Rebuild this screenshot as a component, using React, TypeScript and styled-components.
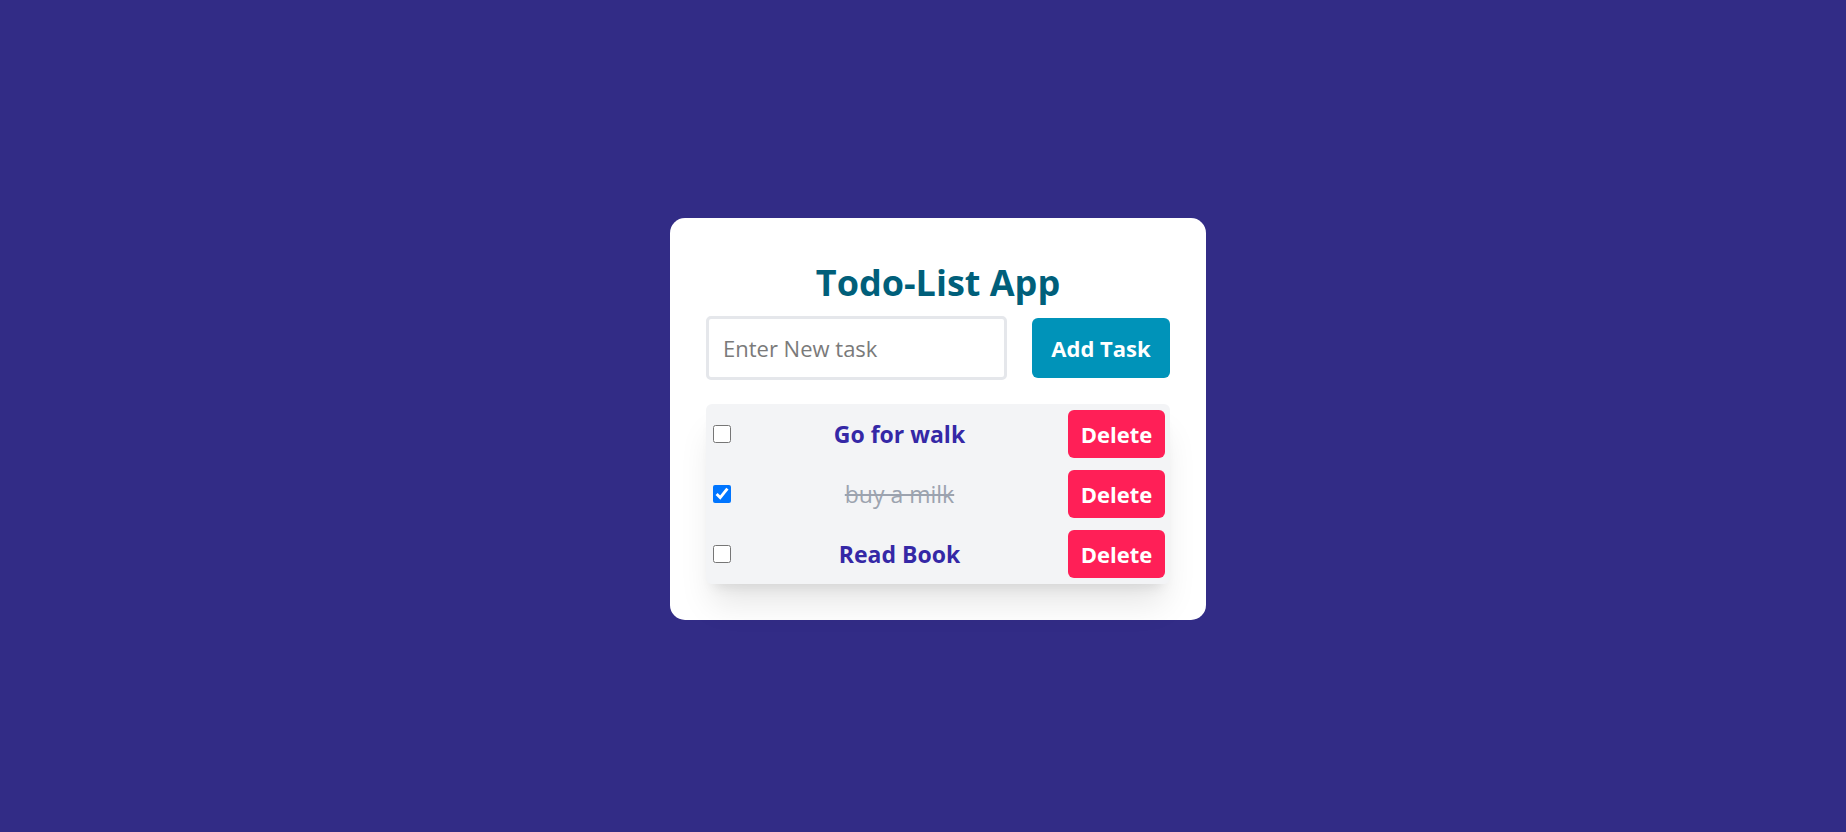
import React, { useState } from 'react';
import styled, { createGlobalStyle } from 'styled-components';

interface Task {
  id: number;
  text: string;
  done: boolean;
}

const GlobalStyle = createGlobalStyle`
  * {
    box-sizing: border-box;
  }

  html, body {
    margin: 0;
    padding: 0;
    height: 100%;
  }

  body {
    background: #322c86;
    font-family: "Segoe UI", "Open Sans", "Noto Sans", sans-serif;
  }
`;

const Page = styled.div`
  min-height: 100vh;
  display: flex;
  align-items: center;
  justify-content: center;
  padding: 5px 0 0 30px;
`;

const Card = styled.div`
  width: 536px;
  background: #ffffff;
  border-radius: 15px;
  padding: 42px 36px 36px;
`;

const Title = styled.h1`
  margin: 0 0 10px;
  font-size: 36px;
  line-height: 46px;
  font-weight: 700;
  color: #005f7a;
  text-align: center;
`;

const InputRow = styled.div`
  display: flex;
  align-items: center;
  gap: 25px;
`;

const TaskInput = styled.input`
  flex: 1;
  min-width: 0;
  height: 64px;
  padding: 0 14px;
  border: 3px solid #e5e7eb;
  border-radius: 5px;
  font-family: inherit;
  font-size: 22px;
  color: #222;
  outline: none;

  &::placeholder {
    color: #7a7a7a;
  }
`;

const AddButton = styled.button`
  width: 138px;
  height: 60px;
  border: none;
  border-radius: 6px;
  background: #0093b9;
  color: #ffffff;
  font-family: inherit;
  font-size: 22px;
  font-weight: 700;
  cursor: pointer;
`;

const List = styled.ul`
  list-style: none;
  margin: 24px 0 0;
  padding: 0;
  background: #f3f4f6;
  border-radius: 6px;
  box-shadow: 0 25px 31px -6px rgba(0, 0, 0, 0.1), 0 10px 12px -8px rgba(0, 0, 0, 0.1);
`;

const Row = styled.li`
  display: flex;
  align-items: center;
  height: 60px;
  padding: 0 5px 0 7px;
`;

const Check = styled.input`
  width: 18px;
  height: 18px;
  margin: 0;
  cursor: pointer;
`;

const TaskText = styled.span<{ $done: boolean }>`
  flex: 1;
  text-align: center;
  font-size: 23px;
  font-weight: ${p => (p.$done ? 400 : 700)};
  color: ${p => (p.$done ? '#9ca3af' : '#3528a6')};
  text-decoration: ${p => (p.$done ? 'line-through' : 'none')};
`;

const DeleteButton = styled.button`
  width: 97px;
  height: 48px;
  border: none;
  border-radius: 6px;
  background: #ff1f57;
  color: #ffffff;
  font-family: inherit;
  font-size: 22px;
  font-weight: 700;
  cursor: pointer;
`;

const initialTasks: Task[] = [
  { id: 1, text: 'Go for walk', done: false },
  { id: 2, text: 'buy a milk', done: true },
  { id: 3, text: 'Read Book', done: false },
];

export default function App() {
  const [tasks, setTasks] = useState<Task[]>(initialTasks);
  const [value, setValue] = useState('');

  const addTask = () => {
    if (!value.trim()) return;
    setTasks(prev => [...prev, { id: Date.now(), text: value.trim(), done: false }]);
    setValue('');
  };

  const toggle = (id: number) => {
    setTasks(prev => prev.map(t => (t.id === id ? { ...t, done: !t.done } : t)));
  };

  const remove = (id: number) => {
    setTasks(prev => prev.filter(t => t.id !== id));
  };

  return (
    <>
      <GlobalStyle />
      <Page>
        <Card>
          <Title>Todo-List App</Title>
          <InputRow>
            <TaskInput
              placeholder="Enter New task"
              value={value}
              onChange={e => setValue(e.target.value)}
            />
            <AddButton onClick={addTask}>Add Task</AddButton>
          </InputRow>
          <List>
            {tasks.map(task => (
              <Row key={task.id}>
                <Check type="checkbox" checked={task.done} onChange={() => toggle(task.id)} />
                <TaskText $done={task.done}>{task.text}</TaskText>
                <DeleteButton onClick={() => remove(task.id)}>Delete</DeleteButton>
              </Row>
            ))}
          </List>
        </Card>
      </Page>
    </>
  );
}
